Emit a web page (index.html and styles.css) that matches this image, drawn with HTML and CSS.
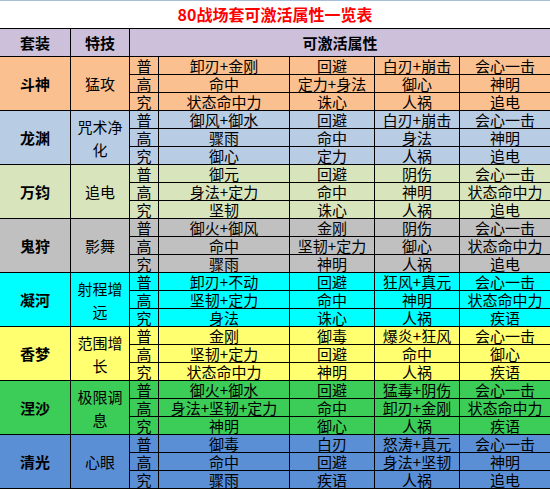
FILE: index.html
```html
<!DOCTYPE html>
<html lang="zh-CN">
<head>
<meta charset="utf-8">
<title>80战场套可激活属性一览表</title>
<link rel="stylesheet" href="styles.css">
</head>
<body>
<div class="sheet">
  <div class="cell title">80战场套可激活属性一览表</div>
  <div class="cell head">套装</div>
  <div class="cell head">特技</div>
  <div class="cell head attrs">可激活属性</div>

  <div class="cell name g1">斗神</div><div class="cell skill g1">猛攻</div>
  <div class="cell g1">普</div><div class="cell g1">卸刃+金刚</div><div class="cell g1">回避</div><div class="cell g1">白刃+崩击</div><div class="cell g1">会心一击</div>
  <div class="cell g1">高</div><div class="cell g1">命中</div><div class="cell g1">定力+身法</div><div class="cell g1">御心</div><div class="cell g1">神明</div>
  <div class="cell g1">究</div><div class="cell g1">状态命中力</div><div class="cell g1">诛心</div><div class="cell g1">人祸</div><div class="cell g1">追电</div>

  <div class="cell name g2">龙渊</div><div class="cell skill g2">咒术净化</div>
  <div class="cell g2">普</div><div class="cell g2">御风+御水</div><div class="cell g2">回避</div><div class="cell g2">白刃+崩击</div><div class="cell g2">会心一击</div>
  <div class="cell g2">高</div><div class="cell g2">骤雨</div><div class="cell g2">命中</div><div class="cell g2">身法</div><div class="cell g2">神明</div>
  <div class="cell g2">究</div><div class="cell g2">御心</div><div class="cell g2">定力</div><div class="cell g2">人祸</div><div class="cell g2">追电</div>

  <div class="cell name g3">万钧</div><div class="cell skill g3">追电</div>
  <div class="cell g3">普</div><div class="cell g3">御元</div><div class="cell g3">回避</div><div class="cell g3">阴伤</div><div class="cell g3">会心一击</div>
  <div class="cell g3">高</div><div class="cell g3">身法+定力</div><div class="cell g3">命中</div><div class="cell g3">神明</div><div class="cell g3">状态命中力</div>
  <div class="cell g3">究</div><div class="cell g3">坚韧</div><div class="cell g3">诛心</div><div class="cell g3">人祸</div><div class="cell g3">追电</div>

  <div class="cell name g4">鬼狩</div><div class="cell skill g4">影舞</div>
  <div class="cell g4">普</div><div class="cell g4">御火+御风</div><div class="cell g4">金刚</div><div class="cell g4">阴伤</div><div class="cell g4">会心一击</div>
  <div class="cell g4">高</div><div class="cell g4">命中</div><div class="cell g4">坚韧+定力</div><div class="cell g4">御心</div><div class="cell g4">状态命中力</div>
  <div class="cell g4">究</div><div class="cell g4">骤雨</div><div class="cell g4">神明</div><div class="cell g4">人祸</div><div class="cell g4">追电</div>

  <div class="cell name g5">凝河</div><div class="cell skill g5">射程增远</div>
  <div class="cell g5">普</div><div class="cell g5">卸刃+不动</div><div class="cell g5">回避</div><div class="cell g5">狂风+真元</div><div class="cell g5">会心一击</div>
  <div class="cell g5">高</div><div class="cell g5">坚韧+定力</div><div class="cell g5">命中</div><div class="cell g5">神明</div><div class="cell g5">状态命中力</div>
  <div class="cell g5">究</div><div class="cell g5">身法</div><div class="cell g5">诛心</div><div class="cell g5">人祸</div><div class="cell g5">疾语</div>

  <div class="cell name g6">香梦</div><div class="cell skill g6">范围增长</div>
  <div class="cell g6">普</div><div class="cell g6">金刚</div><div class="cell g6">御毒</div><div class="cell g6">爆炎+狂风</div><div class="cell g6">会心一击</div>
  <div class="cell g6">高</div><div class="cell g6">坚韧+定力</div><div class="cell g6">回避</div><div class="cell g6">命中</div><div class="cell g6">御心</div>
  <div class="cell g6">究</div><div class="cell g6">状态命中力</div><div class="cell g6">神明</div><div class="cell g6">人祸</div><div class="cell g6">疾语</div>

  <div class="cell name g7">涅沙</div><div class="cell skill g7">极限调息</div>
  <div class="cell g7">普</div><div class="cell g7">御火+御水</div><div class="cell g7">回避</div><div class="cell g7">猛毒+阴伤</div><div class="cell g7">会心一击</div>
  <div class="cell g7">高</div><div class="cell g7">身法+坚韧+定力</div><div class="cell g7">命中</div><div class="cell g7">卸刃+金刚</div><div class="cell g7">状态命中力</div>
  <div class="cell g7">究</div><div class="cell g7">神明</div><div class="cell g7">御心</div><div class="cell g7">人祸</div><div class="cell g7">疾语</div>

  <div class="cell name g8">清光</div><div class="cell skill g8">心眼</div>
  <div class="cell g8">普</div><div class="cell g8">御毒</div><div class="cell g8">白刃</div><div class="cell g8">怒涛+真元</div><div class="cell g8">会心一击</div>
  <div class="cell g8">高</div><div class="cell g8">命中</div><div class="cell g8">回避</div><div class="cell g8">身法+坚韧</div><div class="cell g8">神明</div>
  <div class="cell g8">究</div><div class="cell g8">骤雨</div><div class="cell g8">疾语</div><div class="cell g8">人祸</div><div class="cell g8">追电</div>
</div>
</body>
</html>
```

FILE: styles.css
```css
html, body {
  margin: 0;
  padding: 0;
  background: #ffffff;
}

body {
  font-family: "Noto Sans CJK SC", "Noto Sans", sans-serif;
  color: #000000;
}

.sheet {
  width: 550px;
  display: grid;
  grid-template-columns: 70px 58px 28px 130px 84px 84px 90px;
  grid-template-rows: 27px 27px repeat(24, 17px);
  gap: 1px;
  background: #000000;
  border-top: 1px solid #a9bed9;
  border-bottom: 1px solid #000000;
}

.cell {
  display: flex;
  align-items: center;
  justify-content: center;
  font-size: 15px;
  line-height: 17px;
  white-space: nowrap;
  text-align: center;
}

.title {
  grid-column: 1 / span 7;
  background: #ffffff;
  color: #ff0000;
  font-weight: bold;
  font-size: 16px;
}

.head {
  background: #ccc0da;
  font-weight: bold;
}

.attrs {
  grid-column: 3 / span 5;
}

.name {
  grid-row: span 3;
  font-weight: bold;
}

.skill {
  grid-row: span 3;
  white-space: normal;
  line-height: 23px;
  padding: 0 5px;
}

.g1 { background: #fac090; }
.g2 { background: #b8cce4; }
.g3 { background: #d8e4bc; }
.g4 { background: #c0c0c0; }
.g5 { background: #00ffff; }
.g6 { background: #ffff70; }
.g7 { background: #3ccd58; }
.g8 { background: #5a8fd6; }
```
